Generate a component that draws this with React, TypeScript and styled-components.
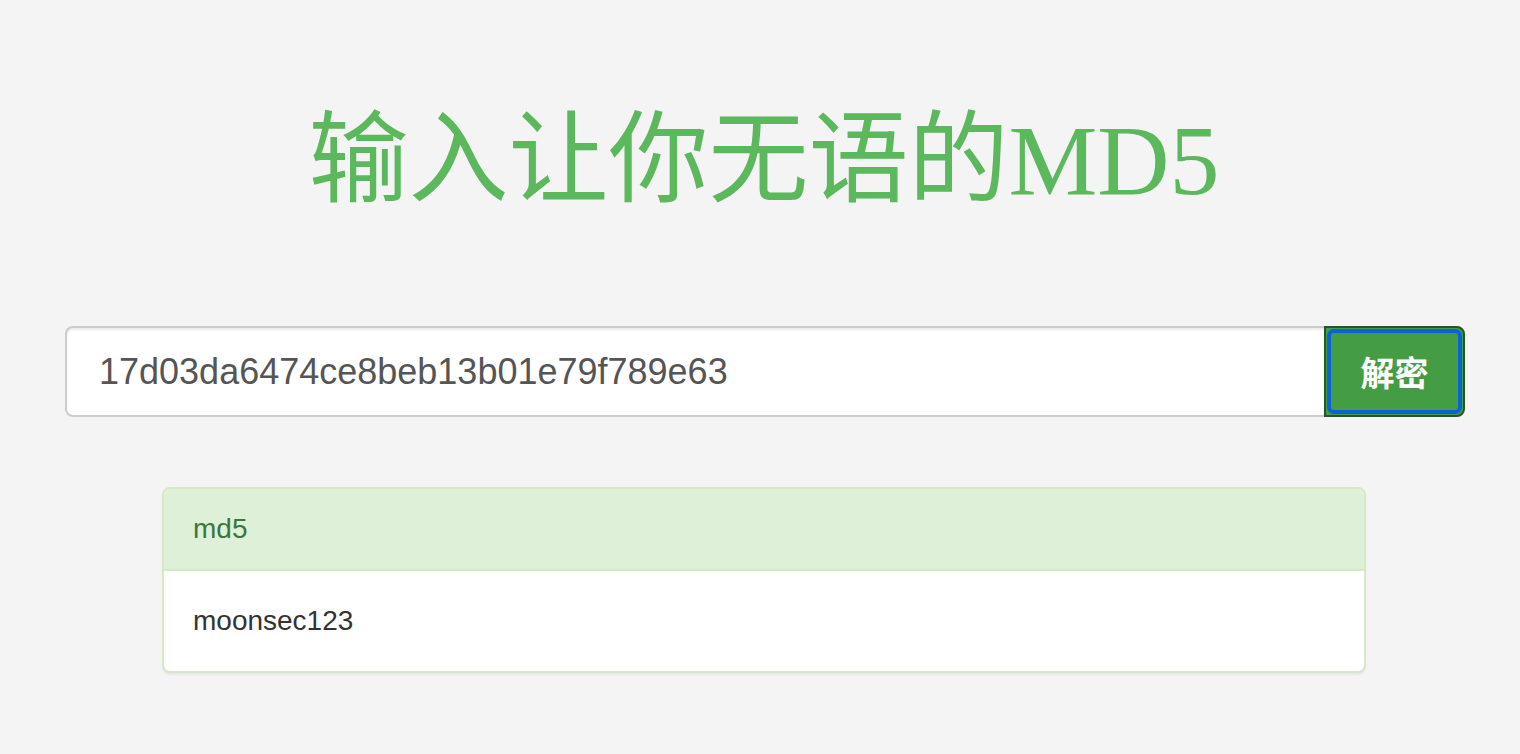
import { useState } from 'react'
import styled, { createGlobalStyle } from 'styled-components'

const GlobalStyle = createGlobalStyle`
    html, body {
        margin: 0;
        padding: 0;
        background-color: #f4f4f4;
        font-family: "Liberation Sans", "Noto Sans CJK SC", sans-serif;
    }
`;

const Page = styled.div`
    display: flex;
    flex-direction: column;
    width: 1520px;
    min-height: 754px;
    padding-top: 96px;
    box-sizing: border-box;
`;

const Title = styled.h1`
    margin: 0;
    text-align: center;
    font-family: "Liberation Serif", "Noto Sans CJK SC", serif;
    font-weight: normal;
    font-size: 100px;
    line-height: 130px;
    color: #5cb85c;
    padding-left: 8px;
`;

const Form = styled.form`
    display: flex;
    height: 91px;
    margin: 100px 55px 0 65px;
`;

const Input = styled.input`
    flex: 1;
    min-width: 0;
    height: 100%;
    box-sizing: border-box;
    padding: 0 32px;
    border: 2px solid #ccc;
    border-right: none;
    border-radius: 8px 0 0 8px;
    background-color: #fff;
    color: #555;
    font-family: "Liberation Sans", sans-serif;
    font-size: 36px;
    outline: none;
    box-shadow: inset 0 2px 2px rgba(0, 0, 0, 0.075);
`;

const Button = styled.button`
    position: relative;
    width: 141px;
    height: 100%;
    box-sizing: border-box;
    border: 2px solid #255625;
    border-radius: 0 8px 8px 0;
    background-color: #449d44;
    color: #fff;
    font-family: "Noto Sans CJK SC", sans-serif;
    font-weight: bold;
    font-size: 34px;
    cursor: pointer;

    &::after {
        content: '';
        position: absolute;
        inset: 1px;
        border: 4px solid #0b62d6;
        border-radius: 7px;
        pointer-events: none;
    }
`;

const Panel = styled.div`
    margin: 70px 154px 0 162px;
    border: 2px solid #d6e9c6;
    border-radius: 8px;
    background-color: #fff;
    overflow: hidden;
    box-shadow: 0 2px 2px rgba(0, 0, 0, 0.05);
`;

const PanelHeading = styled.div`
    padding: 20px 29px;
    background-color: #dff0d8;
    border-bottom: 2px solid #d6e9c6;
    color: #3c763d;
    font-size: 28px;
    line-height: 40px;
`;

const PanelBody = styled.div`
    padding: 30px 29px;
    color: #333;
    font-size: 28px;
    line-height: 40px;
`;

function App() {
    const [hash, setHash] = useState('17d03da6474ce8beb13b01e79f789e63');
    const [result] = useState('moonsec123');

    const handleSubmit = (e: React.FormEvent<HTMLFormElement>) => {
        e.preventDefault();
    };

    return (
        <Page>
            <GlobalStyle />
            <Title>输入让你无语的MD5</Title>
            <Form onSubmit={handleSubmit}>
                <Input
                    type='text'
                    value={hash}
                    onChange={(e) => setHash(e.target.value)}
                />
                <Button type='submit'>解密</Button>
            </Form>
            <Panel>
                <PanelHeading>md5</PanelHeading>
                <PanelBody>{result}</PanelBody>
            </Panel>
        </Page>
    )
}

export default App
